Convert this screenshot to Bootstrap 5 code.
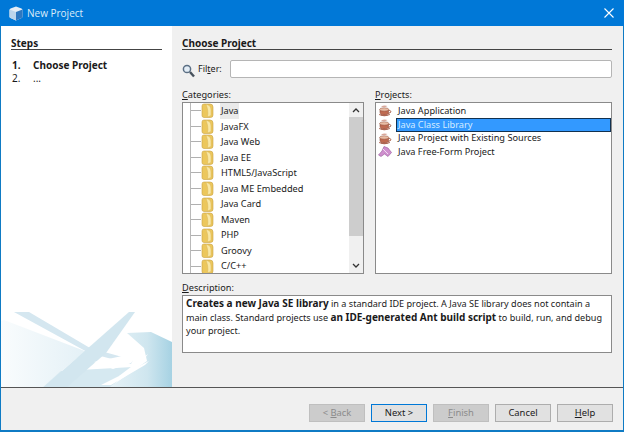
<!DOCTYPE html>
<html lang="en"><head><meta charset="utf-8"><title>New Project</title>
<link href="https://cdn.jsdelivr.net/npm/bootstrap@5.3.0/dist/css/bootstrap.min.css" rel="stylesheet">
<style>
html,body{height:432px;overflow:hidden}
body{font-family:"Noto Sans","Open Sans",sans-serif;font-size:9.2px;line-height:13px;color:#1a1a1a;background:#f0f0f0}
.win{width:624px;height:432px;border:1px solid #0f7bc4;border-top:0;border-bottom-width:2px;display:flex;flex-direction:column;background:#f0f0f0}
.tbar{height:26px;margin:0 -1px;background:#0078d7;color:#dcecf9;font:10px/26px "Open Sans",sans-serif;padding-left:9px;gap:4px;flex:none}
.tbar svg{flex:none}
.xbtn{margin-left:auto;margin-right:10px}
.mainw{height:362px;flex:none;border-bottom:1px solid #555}
.side{width:171px;background:#fff;padding-top:11px;flex:none}
.side svg{margin-top:auto;display:block}
.headg{font-weight:700;font-size:10px;line-height:12px;border-bottom:1px solid #444;padding-bottom:1px;height:13px;margin:0}
.side .headg{margin:0 10px 0 10px}
.steps{margin:9px 0 0 11px;line-height:13px;font-size:10px}
.steps span:first-child{display:inline-block;width:21px}
.fw{font-weight:700}
.panel{flex:1;padding:11px 11px 0 10px;min-width:0}
.frow{margin-top:10px;height:18px}
.frow label{margin:0 8px 0 3px;line-height:18px;font-size:9px}
.finput{height:18px;flex:1;min-height:0;padding:0;border:1px solid #b5b5b5;border-radius:2px;background:#fff}
.lbl{line-height:13px;height:13px;display:block;margin:0 0 1px;font-size:9.2px}
.lbl u{text-underline-offset:1px}
.cols{margin-top:10px;gap:11px;height:193px}
.catc{width:182px;flex:none}
.projc{flex:1;min-width:0}
.box{border:1px solid #8a8a8a;background:#fff;height:172px;overflow:hidden}
.tree{flex:1;margin-left:7px;border-left:1px solid #b9b9b9;min-width:0}
.trow{height:15.55px;line-height:15.55px;display:flex;align-items:center;font-size:9.2px}
.trow i{display:block;width:10px;border-top:1px solid #b0b0b0;flex:none}
.trow svg{flex:none;margin-right:6px}
.trow b{font-weight:400;padding:0 1px}
.trow.cur b{background:#eaeaea}
.sbar{width:14px;flex:none;background:#f0f0f0;display:flex;flex-direction:column}
.sbar svg{flex:none;display:block}
.sthumb{height:119px;background:#cdcdcd}
.sgap{flex:1}
.prow{height:13.7px;display:flex;align-items:center;padding-left:2px;gap:4px}
.prow svg{flex:none}
.prow span{flex:1;padding-left:1px;border:1px solid transparent;line-height:12px;height:14px}
.prow.act span{background:#3399ff;border-color:#12314f;color:#d5ecff}
.plist{padding-top:1px}
.desc{height:58px;border:1px solid #8a8a8a;background:#fff;padding:1px 2px 0 3px;line-height:13.6px;font-size:9.1px}
.desc .fw{font-size:10px;line-height:13px}
.foot{flex:1;gap:6px;padding:16px 10px 0 0;align-items:flex-start;justify-content:flex-end}
.wbtn{width:56px;height:18px;padding:0;font-size:9.4px;line-height:16px;border-radius:0;border:1px solid #adadad;background:#e1e1e1;color:#1a1a1a;--bs-btn-hover-bg:#e1e1e1}
.wbtn.pri{border:1px solid #0078d7;background:#e1e1e1}
.wbtn:disabled{opacity:1;background:#ccc;border-color:#bfbfbf;color:#8b8b8b}
</style></head><body>
<div class="win">
<div class="tbar d-flex align-items-center">
<svg width="14" height="15" viewBox="0 0 14 15"><path d="M7 .5 12.5 2.5Q13.5 3 13.5 4V10.5Q13.5 11.5 12.5 12L7 14.5 1.5 12Q.5 11.5.5 10.5V4Q.5 3 1.5 2.5Z" fill="#e4edf6"/><path d="M7 6 13.5 3.5V10.5Q13.5 11.5 12.5 12L7 14.5Z" fill="#2f78c0"/><path d="M7 6V14.5L1.5 12Q.5 11.5.5 10.5V3.5Z" fill="#bcd5ec"/></svg>
<span>New Project</span>
<svg class="xbtn" width="10" height="10" viewBox="0 0 10 10"><path d="M.5.5l9 9M9.5.5l-9 9" stroke="#fff" stroke-width="1.1"/></svg>
</div>
<div class="mainw d-flex">
<div class="side d-flex flex-column">
<p class="headg">Steps</p>
<div class="steps"><div class="fw"><span>1.</span><span>Choose Project</span></div><div><span>2.</span><span>...</span></div></div>
<svg width="171" height="76" viewBox="0 0 171 76"><defs><linearGradient id="g1" x1="0" y1="0" x2="1" y2="0"><stop offset="0" stop-color="#e6f2f7"/><stop offset=".6" stop-color="#cfe6ef"/><stop offset="1" stop-color="#a6d2e3"/></linearGradient><linearGradient id="g2" x1="0" y1="0" x2="1" y2="0"><stop offset="0" stop-color="#f9fcfd"/><stop offset="1" stop-color="#e3f0f6"/></linearGradient></defs>
<path d="M3 9 89 42 76 47 42 76H0V10Z" fill="url(#g2)"/>
<path d="M60 60 132 56 110 76H42Z" fill="#d6e9f1"/>
<path d="M13 1H28L89 37 132 49 130 53 88 42Z" fill="#d5e7f0"/>
<path d="M134 1H128L43 76H66L105 42Z" fill="#d2e6ef"/>
<path d="M126 22 150 21 171 31V76H109L146 50 143 37Z" fill="url(#g1)"/>
<path d="M93 51 140 41 130 52 112 58Z" fill="#fff"/>
<path d="M118 65 147 43 142 50 124 65Z" fill="#fff"/>
<path d="M100 74 148 50 144 54 110 74Z" fill="#fff"/>
</svg>
</div>
<div class="panel">
<p class="headg">Choose Project</p>
<div class="frow d-flex">
<svg width="13" height="14" viewBox="0 0 13 14" class="mt-1 flex-none"><circle cx="5" cy="5" r="3.6" fill="#e3edf6" stroke="#5b6f84" stroke-width="1.5"/><path d="M8 8l4 4.5" stroke="#46515c" stroke-width="2.4"/></svg>
<label for="flt">Fil<u>t</u>er:</label><input id="flt" class="finput form-control" type="text">
</div>
<div class="cols d-flex">
<div class="catc">
<span class="lbl"><u>C</u>ategories:</span>
<div class="box d-flex">
<div class="tree" id="tree"></div>
<div class="sbar">
<svg width="14" height="14" viewBox="0 0 14 14"><path d="M4 9l3-3 3 3" fill="none" stroke="#333" stroke-width="1.3"/></svg>
<div class="sthumb"></div><div class="sgap"></div>
<svg width="14" height="15" viewBox="0 0 14 15"><path d="M4 6l3 3 3-3" fill="none" stroke="#333" stroke-width="1.3"/></svg>
</div>
</div>
</div>
<div class="projc">
<span class="lbl"><u>P</u>rojects:</span>
<div class="box plist d-flex flex-column" id="plist"></div>
</div>
</div>
<span class="lbl"><u>D</u>escription:</span>
<div class="desc"><span class="fw">Creates a new Java SE library</span> in a standard IDE project. A Java SE library does not contain a main class. Standard projects use <span class="fw">an IDE-generated Ant build script</span> to build, run, and debug your project.</div>
</div>
</div>
<div class="foot d-flex">
<button class="btn wbtn" disabled>&lt; <u>B</u>ack</button>
<button class="btn wbtn pri">Next &gt;</button>
<button class="btn wbtn" disabled><u>F</u>inish</button>
<button class="btn wbtn">Cancel</button>
<button class="btn wbtn"><u>H</u>elp</button>
</div>
</div>
<script>
var folder='<svg width="13" height="15" viewBox="0 0 13 15"><path d="M1 3Q1 1 3 1H9Q12 1 12 4V12Q12 14.5 9.5 14.5H3Q1 14.5 1 12.5Z" fill="#ecc75c" stroke="#c9a244" stroke-width=".6"/><path d="M5 1.5C9 2 10 4 10 7.5V12.5L6.5 14C7.5 9 6.5 5 5 1.5Z" fill="#f9e8a6" stroke="#d9b65c" stroke-width=".5"/></svg>';
var cats=["Java","JavaFX","Java Web","Java EE","HTML5/JavaScript","Java ME Embedded","Java Card","Maven","PHP","Groovy","C/C++"];
document.getElementById('tree').innerHTML=cats.map(function(c,i){return '<div class="trow'+(i?'':' cur')+'"><i></i>'+folder+'<b>'+c+'</b></div>'}).join('');
var cup='<svg width="14" height="13" viewBox="0 0 14 13"><path d="M2 5.5H10.5V8Q10.5 11 6.2 11T2 8Z" fill="#bf6a50" stroke="#8c4a38" stroke-width=".6"/><ellipse cx="6.2" cy="5.5" rx="4.6" ry="1.7" fill="#e9bda5" stroke="#8c4a38" stroke-width=".5"/><path d="M10.5 6.5Q13.6 6.3 12.5 8.5L10 9.5" fill="none" stroke="#a65a44"/><path d="M3 2.8Q6 .5 9.5 2Q7 3.6 5 3.2" fill="#d8a79a"/><path d="M1 10.5Q6 13.5 12 10.5Q6 12 1 10.5Z" fill="#a65a44" stroke="#a65a44" stroke-width=".5"/></svg>';
var ff='<svg width="14" height="13" viewBox="0 0 14 13"><path d="M.5 10 4 6 6 1.5 10 3 13.5 7.5 10 11.5 6.5 9 3 11.5Z" fill="#cf8fce" stroke="#96589b" stroke-width=".6"/><path d="M5 4 10 9" stroke="#f2dcf1"/></svg>';
var pr=["Java Application","Java Class Library","Java Project with Existing Sources","Java Free-Form Project"];
document.getElementById('plist').innerHTML=pr.map(function(p,i){return '<div class="prow'+(i==1?' act':'')+'">'+(i==3?ff:cup)+'<span>'+p+'</span></div>'}).join('');
</script>
</body></html>
